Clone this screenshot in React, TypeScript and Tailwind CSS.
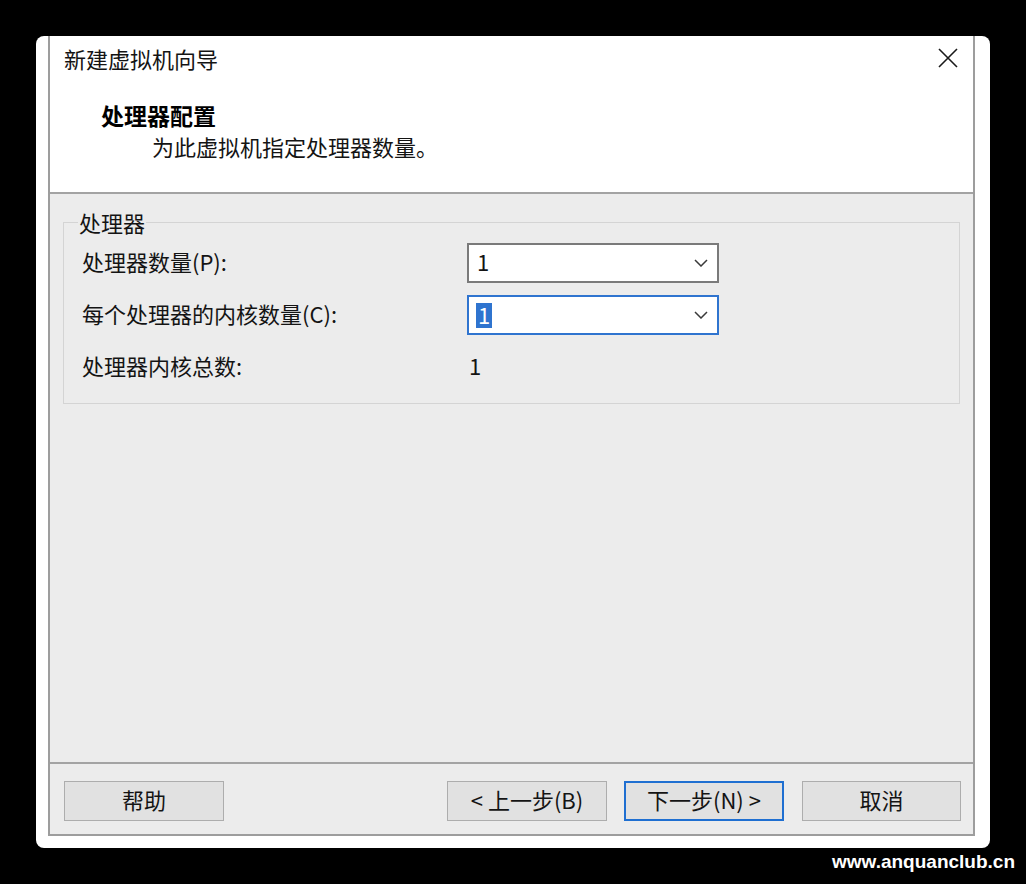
import type { ReactNode } from "react"

function Chevron() {
  return (
    <svg width="14" height="8" viewBox="0 0 14 8" fill="none">
      <polyline points="1,1 7,7 13,1" stroke="#3a3a3a" strokeWidth="1.5" />
    </svg>
  )
}

function Combo({ focused }: { focused?: boolean }) {
  return (
    <div
      className={`w-[252px] h-[40px] bg-white flex items-center justify-between pr-[9px] border-2 ${
        focused ? "border-[#2f74cf] pl-[7px]" : "border-[#7a7a7a] pl-[8px]"
      }`}
    >
      {focused ? (
        <span className="bg-[#2f74cf] text-white h-[25px] leading-[23px] px-[2px]">1</span>
      ) : (
        <span className="pb-[4px]">1</span>
      )}
      <Chevron />
    </div>
  )
}

function Button({ children, primary, width = "w-[160px]" }: { children: ReactNode; primary?: boolean; width?: string }) {
  return (
    <div
      className={`${width} h-[40px] flex items-center justify-center bg-[#e1e1e1] pb-[4px] ${
        primary ? "border-2 border-[#1f6fd1]" : "border border-[#adadad]"
      }`}
    >
      {children}
    </div>
  )
}

export default function App() {
  return (
    <div className="min-h-[884px] w-full bg-black pt-[36px] pl-[36px] font-['Noto_Sans_CJK_SC',sans-serif] text-[22px] text-[#141414]">
      <div className="w-[954px] h-[812px] bg-white rounded-[8px] pl-[12px] pr-[15px] pb-[12px] flex">
        <div className="flex-1 flex flex-col border-x-2 border-b-2 border-[#9d9d9d]">
          {/* header */}
          <div className="h-[156px] bg-white flex flex-col">
            <div className="flex items-center justify-between pt-[8px] pl-[14px] pr-[15px] leading-[28px]">
              <span>新建虚拟机向导</span>
              <svg width="20" height="20" viewBox="0 0 20 20" className="mt-[-1px]">
                <path d="M1 1 L19 19 M19 1 L1 19" stroke="#1a1a1a" strokeWidth="1.6" />
              </svg>
            </div>
            <div className="pl-[51px] mt-[29px] leading-[28px] font-bold text-[23px] text-black">处理器配置</div>
            <div className="pl-[102px] mt-[3px] leading-[28px]">为此虚拟机指定处理器数量。</div>
          </div>
          <div className="h-[2px] bg-[#a3a3a3]" />

          {/* body */}
          <div className="flex-1 bg-[#ececec] px-[13px] pt-[14px]">
            <fieldset className="border border-[#d4d4d4] pl-[18px] pt-[7px] pb-[16px]">
              <legend className="ml-[-4px] px-[1px] leading-[28px]">处理器</legend>
              <div className="flex flex-col gap-[12px]">
                <div className="flex items-center h-[40px]">
                  <span className="w-[385px] pb-[4px]">处理器数量(P):</span>
                  <Combo />
                </div>
                <div className="flex items-center h-[40px]">
                  <span className="w-[385px] pb-[4px]">每个处理器的内核数量(C):</span>
                  <Combo focused />
                </div>
                <div className="flex items-center h-[40px]">
                  <span className="w-[387px] pb-[4px]">处理器内核总数:</span>
                  <span className="pb-[4px]">1</span>
                </div>
              </div>
            </fieldset>
          </div>

          {/* footer */}
          <div className="h-[2px] bg-[#a3a3a3]" />
          <div className="h-[70px] bg-[#ececec] flex pt-[17px] pl-[14px] pr-[12px]">
            <Button>帮助</Button>
            <div className="flex-1" />
            <Button>&lt; 上一步(B)</Button>
            <div className="w-[17px]" />
            <Button primary>下一步(N) &gt;</Button>
            <div className="w-[18px]" />
            <Button width="w-[159px]">取消</Button>
          </div>
        </div>
      </div>
      <div className="flex justify-end pr-[11px] mt-[2px] leading-[24px] text-white font-bold text-[19px] font-['Liberation_Sans',sans-serif]">
        www.anquanclub.cn
      </div>
    </div>
  )
}
